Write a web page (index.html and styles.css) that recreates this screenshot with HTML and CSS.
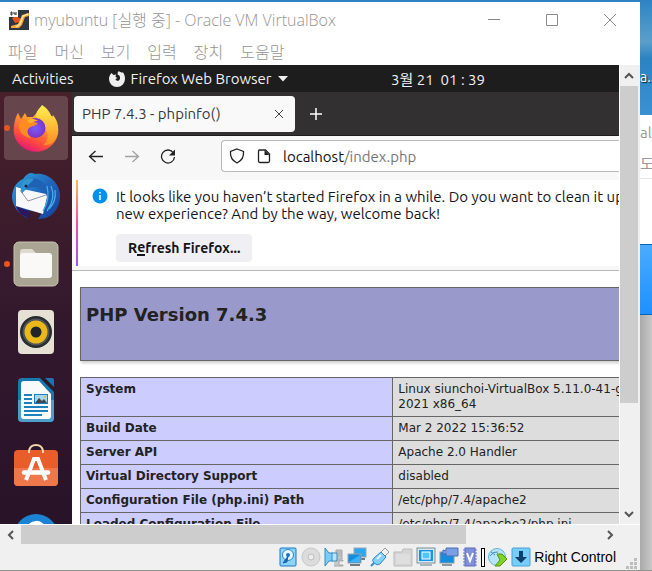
FILE: index.html
```html
<!DOCTYPE html>
<html lang="ko">
<head>
<meta charset="utf-8">
<title>myubuntu - Oracle VM VirtualBox</title>
<link rel="stylesheet" href="styles.css">
</head>
<body>
<main class="vm">
  <header class="titlebar">
    <svg class="app-icon" viewBox="0 0 20 20" aria-hidden="true">
      <rect width="20" height="20" fill="#2f3640"/>
      <path d="M3 8l4-2 5 3-1 3-5 1z" fill="#e2541b"/>
      <path d="M20 3l-7 2-4 9-7 2 0 2 8 0 3-3 3-8 4-1z" fill="#f6a63c"/>
      <path d="M19 4l-5 2-3 8-4 3" fill="none" stroke="#fde3a0" stroke-width="1.5"/>
      <rect width="9" height="7" fill="#fff"/>
      <path d="M2 2v3M2 2h1v3H2M5 2v2h2M7 2v3" fill="none" stroke="#333"/>
    </svg>
    <h1 class="title">myubuntu [실행 중] - Oracle VM VirtualBox</h1>
    <div class="caption">
      <button aria-label="최소화"><svg viewBox="0 0 12 12"><path d="M0 5.500h12"/></svg></button>
      <button aria-label="최대화"><svg viewBox="0 0 12 12"><path d="M.5 .5h11v11H.5z"/></svg></button>
      <button aria-label="닫기"><svg viewBox="0 0 12 12"><path d="M0 0l12 12M12 0L0 12"/></svg></button>
    </div>
  </header>
  <nav class="menubar">
    <button>파일</button><button>머신</button><button>보기</button><button>입력</button><button>장치</button><button>도움말</button>
  </nav>
  <div class="viewport">
    <section class="guest">
      <div class="topbar">
        <button class="activities">Activities</button>
        <button class="app-menu">
          <svg class="fox" viewBox="0 0 16 16" aria-hidden="true"><path d="M2.500 2l2 2 2.500-.5L6.500 6 8.500 7 6.500 8c.5 2.500 4 2.500 4.500-.5C11.300 5 10 3.800 8.500 3.500L9 .5c2 0 3 .5 4 1.500l.5-1C15.500 3 16 5.500 16 8A8 8 0 0 1 0 8c0-2.500 1-4.500 2.500-6z" fill="#eee"/></svg>
          Firefox Web Browser
          <svg class="caret" viewBox="0 0 10 6" aria-hidden="true"><path d="M0 0h10L5 5.500z" fill="#eee"/></svg>
        </button>
        <time class="clock">3월 21&nbsp; 01 : 39</time>
      </div>
      <div class="desktop">
        <nav class="dock">
          <a href="#" class="dock-item active running" aria-label="Firefox">
            <svg viewBox="0 0 48 48">
              <defs>
                <linearGradient id="ff" x1=".8" y1="0" x2=".3" y2="1"><stop offset="0" stop-color="#ffe84a"/><stop offset=".4" stop-color="#ff9a2a"/><stop offset=".75" stop-color="#ff4a40"/><stop offset="1" stop-color="#e3127c"/></linearGradient>
                <radialGradient id="fp"><stop offset="0" stop-color="#7a5cff"/><stop offset="1" stop-color="#7a35c0"/></radialGradient>
                <linearGradient id="fy" x1="0" y1="0" x2="0" y2="1"><stop offset="0" stop-color="#fff14f"/><stop offset="1" stop-color="#ff8a22"/></linearGradient>
              </defs>
              <path d="M6 9l3 6 4-6 2 4 6 0 9-10 4 9 6 0c5 6 7 12 6 18a22.500 22.500 0 0 1-44 0C1 22 3 14 6 9z" fill="url(#ff)"/>
              <path d="M30 1c5 3 8 7 10 13l1-3c6 7 6 15 4 21-3 8-10 10-14 9 5-3 6-10 3-15-2-5-9-7-10-14 0-5 4-8 6-11z" fill="url(#fy)"/>
              <circle cx="23.500" cy="24" r="10" fill="url(#fp)"/>
              <path d="M7 20c4-4 10-5 13-4 1 2 4 3 6 3-2 3-6 3-9 5-3 3-1 7 2 10-8-1-13-7-12-14z" fill="#ff8c21"/>
              <path d="M15 16c3-1 7-2 11 1-4 0-7 2-8 3z" fill="#ffb12c"/>
            </svg>
          </a>
          <a href="#" class="dock-item" aria-label="Thunderbird">
            <svg viewBox="0 0 48 48">
              <defs><linearGradient id="tb" x1="0" y1="0" x2="1" y2="1"><stop offset="0" stop-color="#2fa5dd"/><stop offset=".5" stop-color="#2065bd"/><stop offset="1" stop-color="#173d98"/></linearGradient></defs>
              <path d="M0 26C0 17 4 10 11 7c4-6 8-7 12-5 12-2 24 8 25 20 1 12-6 21-14 24l-8 1 4-6-16-3 1 8C6 42 1 34 0 26z" fill="url(#tb)"/>
              <path d="M4 34l13 5 1 7C10 45 6 40 4 34z" fill="#2a1760"/>
              <path d="M4 15l7 2 23 5 1 3-4 17L4 34z" fill="#f8f8fa"/>
              <path d="M8 18l8 11 18-6" fill="none" stroke="#9097a3" stroke-width="1"/>
              <path d="M9 18c-1-9 9-15 18-10 8 4 9 9 7 13-6-6-13-7-20-4l-4 4z" fill="#1f62b5"/>
              <path d="M9 18C8 10 14 5 22 7c-3 4-6 5-8 10l-4 4z" fill="#3295d2"/>
              <path d="M35 14c2 8 1 17-4 25M39 14c4 9 1 18-4 25M43 18c1 7-1 14-6 19" fill="none" stroke="#43aee5" stroke-width="1.300"/>
              <circle cx="14" cy="14" r="1.500" fill="#17223b"/>
            </svg>
          </a>
          <a href="#" class="dock-item running" aria-label="Files">
            <svg viewBox="0 0 48 48"><rect x="2" y="2" width="44" height="44" rx="5" fill="#aaa493" stroke="#c9c4b3"/><path d="M8 12q0-3 3-3h9l4 4h12q3 0 3 3v5H8z" fill="#dedad0"/><rect x="8" y="13" width="32" height="25" rx="3" fill="#faf9f7"/></svg>
          </a>
          <a href="#" class="dock-item" aria-label="Rhythmbox">
            <svg viewBox="0 0 48 48"><rect x="6" y="2" width="36" height="44" rx="4" fill="#e5e1d5"/><circle cx="24" cy="24" r="16" fill="#292c31"/><circle cx="24" cy="24" r="13.500" fill="#50545b"/><circle cx="24" cy="24" r="11.500" fill="#eab818"/><circle cx="24" cy="24" r="5.500" fill="#222429"/></svg>
          </a>
          <a href="#" class="dock-item" aria-label="LibreOffice Writer">
            <svg viewBox="0 0 48 48"><path d="M10 2h18l14 14v26q0 4-4 4H10q-4 0-4-4V6q0-4 4-4z" fill="#1779ae"/><path d="M6 24h36v18q0 4-4 4H10q-4 0-4-4z" fill="#4d9fca"/><path d="M12 5h15l12 13v22q0 3-3 3H12q-3 0-3-3V8q0-3 3-3z" fill="#fafafa"/><path d="M33 2h7q2 0 2 2v7z" fill="#1676ad"/><path d="M12 19h8M12 23h8M12 27h8M12 31h24M12 35h24M12 39h18" stroke="#1a82bd" stroke-width="2"/><rect x="22.500" y="18.500" width="13" height="9" fill="#a6d5ef" stroke="#1a82bd"/><path d="M23 27l4-5 3 3 2-2 3 4z" fill="#3d474d"/><circle cx="33" cy="21" r="1" fill="#f0b321"/></svg>
          </a>
          <a href="#" class="dock-item" aria-label="Ubuntu Software">
            <svg viewBox="0 0 48 48"><path d="M6 6h36q4 0 4 4v28q0 4-4 4H6q-4 0-4-4V10q0-4 4-4z" fill="#e95d2b"/><path d="M2 24h44v14q0 4-4 4H6q-4 0-4-4z" fill="#ee774c"/><path d="M17 9V7q1-6 7-6t7 6v2" fill="none" stroke="#eed8ab" stroke-width="2"/><path d="M14 36l8-21h4l8 21" fill="none" stroke="#fff" stroke-width="4"/><path d="M12 28.500h24" stroke="#fff" stroke-width="4.500" stroke-linecap="round"/></svg>
          </a>
          <a href="#" class="dock-item" aria-label="Help">
            <svg viewBox="0 0 48 48"><circle cx="24" cy="24" r="22" fill="#1c83d4"/><path d="M17 19c0-10 14-10 14-1 0 7-7 6-7 12" fill="none" stroke="#fff" stroke-width="5"/></svg>
          </a>
        </nav>
        <div class="browser">
          <div class="tabs">
            <div class="tab"><span>PHP 7.4.3 - phpinfo()</span><button aria-label="Close tab"><svg viewBox="0 0 8 8"><path d="M0 0l8 8M8 0L0 8"/></svg></button></div>
            <button class="new-tab" aria-label="New tab"><svg viewBox="0 0 12 12"><path d="M6 0v12M0 6h12"/></svg></button>
          </div>
          <div class="toolbar">
            <button aria-label="Back"><svg viewBox="0 0 16 16"><path d="M15 8.500H1.500M7.500 3L1.500 8.500l6 5.500"/></svg></button>
            <button aria-label="Forward" disabled><svg viewBox="0 0 16 16"><path d="M1 8.500h13.500M8.500 3l6 5.500-6 5.500"/></svg></button>
            <button aria-label="Reload"><svg viewBox="0 0 16 16"><path d="M13.500 5A6.500 6.500 0 1 0 14.500 9"/><path class="solid" d="M15 1.500v6H9z"/></svg></button>
            <div class="urlbar">
              <svg viewBox="0 0 16 16" aria-hidden="true"><path d="M8 1l6.500 2.500c.5 5-1.500 9-6.500 11.500C3 12.500 1 8.500 1.500 3.500z"/></svg>
              <svg viewBox="0 0 16 16" aria-hidden="true"><path d="M3.500 2h6l4 4v7q0 1.500-1.500 1.500H4Q2.500 14.500 2.500 13V3.500Q2.500 2 3.500 2z"/><path class="solid" d="M8.500 2l5 5h-5z"/></svg>
              <a href="#" class="address">localhost<span>/index.php</span></a>
            </div>
          </div>
          <div class="notice">
            <svg class="info" viewBox="0 0 16 16" aria-hidden="true"><circle cx="8" cy="8" r="7.500" fill="#0090ed"/><path d="M8 4v1.500M8 7v5" stroke="#fff" stroke-width="1.500"/></svg>
            <div>
              <p>It looks like you haven’t started Firefox in a while. Do you want to clean it up<br>new experience? And by the way, welcome back!</p>
              <button class="refresh">R<span>e</span>fresh Firefox...</button>
            </div>
          </div>
          <div class="page">
            <div class="php-head"><h2>PHP Version 7.4.3</h2></div>
            <table class="php-info">
              <tr><th scope="row">System</th><td>Linux siunchoi-VirtualBox 5.11.0-41-g<br>2021 x86_64</td></tr>
              <tr><th scope="row">Build Date</th><td>Mar 2 2022 15:36:52</td></tr>
              <tr><th scope="row">Server API</th><td>Apache 2.0 Handler</td></tr>
              <tr><th scope="row">Virtual Directory Support</th><td>disabled</td></tr>
              <tr><th scope="row">Configuration File (php.ini) Path</th><td>/etc/php/7.4/apache2</td></tr>
              <tr><th scope="row">Loaded Configuration File</th><td>/etc/php/7.4/apache2/php.ini</td></tr>
            </table>
          </div>
        </div>
      </div>
    </section>
    <div class="vscroll">
      <button aria-label="위로"><svg viewBox="0 0 10 10"><path d="M1 7l4-4 4 4"/></svg></button>
      <div class="vtrack"><div class="vthumb"></div></div>
      <button aria-label="아래로"><svg viewBox="0 0 10 10"><path d="M1 3l4 4 4-4"/></svg></button>
    </div>
  </div>
  <div class="hscroll">
    <button aria-label="왼쪽"><svg viewBox="0 0 10 10"><path d="M7 1L3 5l4 4"/></svg></button>
    <div class="htrack"><div class="hthumb"></div></div>
    <button aria-label="오른쪽"><svg viewBox="0 0 10 10"><path d="M3 1l4 4-4 4"/></svg></button>
  </div>
  <footer class="status">
    <svg viewBox="0 0 20 20"><rect x="2" y="1" width="16" height="18" rx="1" fill="#8fd3fb" stroke="#1878c4"/><circle cx="10" cy="8" r="5.500" fill="#e8f7ff" stroke="#2a86c8"/><circle cx="10" cy="8" r="2" fill="#1a79c0"/><path d="M10 9l-5 7 4-1z" fill="#1769ae" stroke="#1769ae"/></svg>
    <svg viewBox="0 0 20 20"><circle cx="10" cy="10" r="9" fill="#dcdcdc" stroke="#c6c6c6"/><circle cx="10" cy="10" r="3" fill="#ececec" stroke="#bdbdbd"/></svg>
    <svg viewBox="0 0 20 20"><path d="M12 3h6v9h-6zM10 13h9v1h-4v4h4v1h-9" fill="#c9c9c9" stroke="#a8a8a8"/><path d="M12 5h6M12 7h6M12 9h6" stroke="#aaa"/><path d="M1 1l4 5h4v8H5l-4 5z" fill="#77cdf6" stroke="#3a8cbd"/><path d="M8 6h5v8H8z" fill="#b7e6fc" stroke="#3a8cbd"/></svg>
    <svg viewBox="0 0 20 20"><rect x="7" y="1" width="12" height="9" fill="#29a7f0" stroke="#9aa8b0"/><path d="M10 12h8" stroke="#6b7a83" stroke-width="2"/><rect x="1" y="7" width="13" height="9" fill="#138de0" stroke="#9aa8b0"/><path d="M2 15l11-7v7z" fill="#38b4f6"/><path d="M3 18h10" stroke="#6b7a83" stroke-width="2"/></svg>
    <svg viewBox="0 0 20 20"><path d="M11 5l4-4 4 4-4 4z" fill="#f2f2f2" stroke="#999"/><path d="M4 11l7-6 5 5-6 7q-3 2-6-1t0-5z" fill="#83d1fb" stroke="#3988c2"/><path d="M4 16l-3 3" stroke="#3988c2" stroke-width="2"/><path d="M7 12l4-4" stroke="#e2f7ff" stroke-width="2"/></svg>
    <svg viewBox="0 0 20 20"><path d="M1 5h8l1-3h9v17H1z" fill="#d5d5d5" stroke="#bdbdbd"/><path d="M3 7h14v10H3z" fill="#dedede"/></svg>
    <svg viewBox="0 0 20 20"><rect x="1" y="1" width="18" height="15" fill="#d9e8ef" stroke="#79909b"/><rect x="3" y="3" width="14" height="11" fill="#1694e5"/><rect x="6" y="5" width="8" height="7" fill="#4dc6ff" stroke="#fff"/><path d="M4 18h12" stroke="#a9b5bc" stroke-width="2"/></svg>
    <svg viewBox="0 0 20 20"><rect x="1" y="5" width="14" height="11" fill="#138de0" stroke="#8b9aa3"/><path d="M3 18h10" stroke="#8b9aa3" stroke-width="2"/><path d="M4 3l3 1V1h12v8H7V6L4 8z" fill="#7b9ee5" stroke="#4c6cb9"/></svg>
    <svg class="chip" viewBox="0 0 16 20"><path d="M1 3h14M1 6h14M1 9h14M1 12h14M1 15h14M1 18h14" stroke="#6a78be"/><rect x="3" y="1" width="10" height="18" fill="#7f91dc" stroke="#5c6db9"/><path d="M5 6l3 8 3-8" fill="none" stroke="#fff" stroke-width="2"/></svg>
    <i class="load"></i>
    <svg viewBox="0 0 20 20"><circle cx="9" cy="10" r="8.500" fill="#b6e5fa" stroke="#63b3dc"/><path d="M2 9q3-5 8-4M3 5l4 3" fill="none" stroke="#408cb8"/><path d="M9 7h5l5 5-7 7H7l5-6z" fill="#7dd522" stroke="#52920f"/></svg>
    <svg viewBox="0 0 20 20"><rect x="1" y="1" width="18" height="18" rx="1" fill="#76cdf9" stroke="#4b9fd4"/><path d="M8 4h4v6h4l-6 6-6-6h4z" fill="#103e6d"/></svg>
    <span class="hostkey">Right Control</span>
    <svg class="grip" viewBox="0 0 12 12"><path d="M8 0h3v3H8zM4 4h3v3H4zM8 4h3v3H8zM0 8h3v3H0zM4 8h3v3H4zM8 8h3v3H8z" fill="#bdbdbd"/></svg>
  </footer>
</main>
<aside class="behind">
  <div class="wallpaper">a...</div>
  <div class="other-window"><div class="other-title">alBox</div><div class="other-menu">도움말</div></div>
  <div class="blue-panel"></div>
  <div class="gray-panel"></div>
</aside>
</body>
</html>
```

FILE: styles.css
```css
* { box-sizing: border-box; }

body {
  margin: 0;
  padding: 2px 0 1px;
  height: 100vh;
  display: flex;
  overflow: hidden;
  background: linear-gradient(#2f82c4 50%, #8f9690 50%);
  font: 15px/18px "Ubuntu", "Noto Sans", "Noto Sans CJK KR", sans-serif;
}

button {
  display: inline-flex;
  align-items: center;
  justify-content: center;
  margin: 0;
  padding: 0;
  border: 0;
  background: none;
  color: inherit;
  font: inherit;
}

a { color: inherit; text-decoration: none; }
svg { display: block; flex: none; }

.vm {
  flex: 1;
  min-width: 0;
  display: flex;
  flex-direction: column;
  background: #f0f0f0;
}

/* Host window frame */
.titlebar {
  display: flex;
  align-items: center;
  height: 36px;
  padding-left: 9px;
  background: #fff;
  color: #959595;
}
.app-icon { width: 20px; height: 20px; }
.title {
  flex: 1;
  margin: 0 0 0 5px;
  font: 300 16px/20px "Open Sans", "Noto Sans CJK KR", sans-serif;
  white-space: nowrap;
}
.caption { display: flex; padding-right: 1px; }
.caption button { width: 58px; height: 36px; }
.caption svg { width: 12px; height: 12px; fill: none; stroke: #888; }

.menubar {
  display: flex;
  gap: 17px;
  height: 27px;
  padding: 0 8px 2px;
  background: #fff;
  color: #959595;
  font: 300 16px/24px "Noto Sans CJK KR", sans-serif;
}

.viewport { flex: 1; min-height: 0; display: flex; }

/* Guest screen */
.guest {
  flex: 1;
  min-width: 0;
  display: flex;
  flex-direction: column;
  overflow: hidden;
  border-right: 1px solid #fff;
  margin-right: -1px;
}
.topbar {
  display: flex;
  align-items: center;
  flex: none;
  height: 27px;
  padding-left: 12px;
  background: #1d1d1d;
  color: #f0f0f0;
  white-space: nowrap;
}
.app-menu { gap: 6px; margin-left: 35px; }
.fox { width: 16px; height: 16px; }
.caret { width: 10px; height: 6px; }
.clock { margin: 2px 134px 0 auto; }

.desktop { flex: 1; min-height: 0; display: flex; }
.dock {
  display: flex;
  flex-direction: column;
  gap: 4px;
  width: 72px;
  padding: 4px;
  overflow: hidden;
  background: linear-gradient(#48202a, #32182d 55%, #281329);
}
.dock-item {
  position: relative;
  display: flex;
  align-items: center;
  justify-content: center;
  flex: none;
  height: 64px;
  border-radius: 4px;
}
.dock-item svg { width: 48px; height: 48px; }
.active { background: #66454d; }
.running::before {
  content: "";
  position: absolute;
  left: 0;
  width: 6px;
  height: 6px;
  border-radius: 50%;
  background: #e95420;
}

.browser {
  flex: 1;
  min-width: 0;
  display: flex;
  flex-direction: column;
  overflow: hidden;
  background: #f7f7f8;
  white-space: nowrap;
}
.tabs {
  display: flex;
  align-items: center;
  flex: none;
  height: 44px;
  padding: 0 2px;
  background: #333032;
  border-bottom: 1px solid #1d1d1d;
}
.tab {
  display: flex;
  align-items: center;
  justify-content: space-between;
  width: 221px;
  height: 36px;
  padding: 0 12px 0 8px;
  border-radius: 4px;
  background: #f9f9fa;
  color: #3a3a3c;
}
.tab svg { width: 8px; height: 8px; stroke: #444; }
.new-tab { width: 42px; height: 36px; }
.new-tab svg { width: 12px; height: 12px; stroke: #fff; stroke-width: 1.5; }

.toolbar {
  display: flex;
  align-items: center;
  flex: none;
  height: 44px;
  padding: 0 0 4px 16px;
  color: #222;
}
.toolbar svg { width: 16px; height: 16px; fill: none; stroke: #222; stroke-width: 1.3; }
.toolbar .solid { fill: #222; stroke: none; }
.toolbar button { width: 16px; margin-right: 20px; }
.toolbar button:disabled { opacity: .4; }
.urlbar {
  display: flex;
  align-items: center;
  flex: 1;
  gap: 11px;
  height: 32px;
  margin-left: 25px;
  padding-left: 7px;
  border: 1px solid #b9b9bb;
  border-right: 0;
  border-radius: 4px 0 0 4px;
  background: #fff;
  line-height: 20px;
}
.address { color: #111; padding-top: 1px; }
.address span { color: #777; }

.notice {
  display: flex;
  flex: none;
  gap: 8px;
  height: 86px;
  margin-left: 4px;
  padding: 8px 0 0 14px;
  border-left: 2px solid;
  border-image: linear-gradient(#ffbd4f, #ff4aa2 50%, #9059ff) 1;
  background: #fff;
  color: #15141a;
}
.info { width: 16px; height: 16px; }
.notice p { margin: 0 0 12px; line-height: 17px; }
.refresh {
  height: 28px;
  padding: 0 12px;
  border-radius: 4px;
  background: #f0f0f4;
  font-size: 14px;
  font-weight: 700;
}
.refresh span { border-bottom: 2px solid; line-height: 14px; }

/* PHP information page */
.page {
  flex: 1;
  min-height: 0;
  margin-top: 4px;
  padding: 16px 0 0 8px;
  overflow: hidden;
  border-top: 1px solid #b9b9bb;
  background: #fff;
  color: #222;
  font: 12px/15px "DejaVu Sans", sans-serif;
}
.php-head {
  height: 74px;
  margin-bottom: 16px;
  padding: 16px 5px;
  border: 1px solid #666;
  border-right: 0;
  background: #99c;
  box-shadow: 1px 2px 3px #ccc;
}
.php-head h2 { margin: 0; font-size: 18px; line-height: 22px; }
.php-info { width: 100%; table-layout: fixed; border-collapse: collapse; }
.php-info th, .php-info td {
  padding: 4px 5px;
  border: 1px solid #666;
  vertical-align: top;
  text-align: left;
}
.php-info th { width: 58%; background: #ccf; }
.php-info td { background: #ddd; border-right: 0; }

/* Scrollbars */
.vscroll {
  display: flex;
  flex-direction: column;
  width: 20px;
  padding-right: 2px;
  margin-left: 1px;
}
.vscroll button { height: 21px; flex: none; }
.vscroll svg, .hscroll svg { width: 10px; height: 10px; fill: none; stroke: #555; stroke-width: 2; }
.vtrack { flex: 1; }
.vthumb { height: 76%; background: #cdcdcd; }
.hscroll {
  display: flex;
  flex: none;
  height: 20px;
  padding-right: 20px;
  border-top: 1px solid #fff;
}
.hscroll button { width: 21px; }
.htrack { flex: 1; }
.hthumb { width: 77%; height: 100%; background: #cdcdcd; }

/* Device indicators */
.status {
  display: flex;
  align-items: center;
  justify-content: flex-end;
  flex: none;
  gap: 3px;
  height: 26px;
  padding: 0 2px 0 0;
}
.status svg { width: 20px; height: 20px; }
.status .chip { width: 16px; }
.load { width: 4px; height: 19px; border: 1px solid #000; background: #fff; }
.hostkey { padding-right: 3px; font: 14px/20px "Liberation Sans", sans-serif; color: #000; }
.status .grip { width: 12px; height: 12px; margin-left: 4px; align-self: flex-end; }

/* Desktop strip to the right of the window */
.behind {
  display: flex;
  flex-direction: column;
  width: 12px;
  overflow: hidden;
  white-space: nowrap;
}
.wallpaper {
  height: 113px;
  padding-top: 66px;
  background: linear-gradient(#2f86c5, #5b9fca 35%, #2c83c2 50%, #3a92d2);
  color: #fff;
  font-size: 14px;
  text-shadow: 1px 1px 1px #123;
}
.other-window { height: 129px; background: #fff; color: #999; }
.other-title { height: 36px; padding-top: 9px; }
.other-menu { height: 28px; padding-top: 4px; border-bottom: 1px solid #e5e5e5; }
.blue-panel {
  height: 71px;
  border-top: 1px solid #0067b8;
  border-bottom: 1px solid #0067b8;
  background: linear-gradient(#4aabff, #1e90ff);
}
.gray-panel { flex: 1; background: linear-gradient(90deg, #aaa, #c8c8c8); }
```
